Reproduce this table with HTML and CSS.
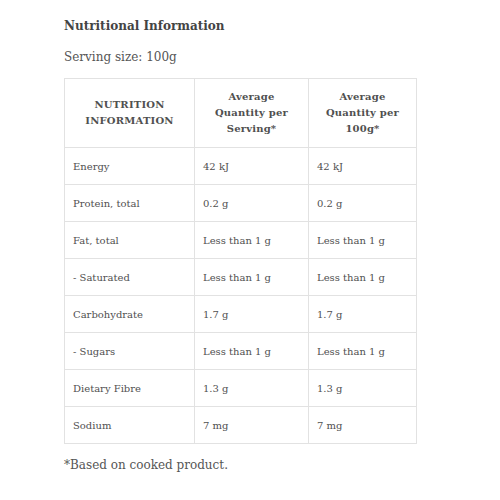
FILE: index.html
```html
<!DOCTYPE html>
<html>
<head>
<meta charset="utf-8">
<link rel="stylesheet" href="styles.css">
</head>
<body>
<div class="wrap">
  <h2 class="title">Nutritional Information</h2>
  <p class="serving">Serving size: 100g</p>
  <table class="nt">
    <thead>
      <tr>
        <th class="c1">NUTRITION<br>INFORMATION</th>
        <th class="c2">Average<br>Quantity per<br>Serving*</th>
        <th class="c3">Average<br>Quantity per<br>100g*</th>
      </tr>
    </thead>
    <tbody>
      <tr><td>Energy</td><td>42 kJ</td><td>42 kJ</td></tr>
      <tr><td>Protein, total</td><td>0.2 g</td><td>0.2 g</td></tr>
      <tr><td>Fat, total</td><td>Less than 1 g</td><td>Less than 1 g</td></tr>
      <tr><td>- Saturated</td><td>Less than 1 g</td><td>Less than 1 g</td></tr>
      <tr><td>Carbohydrate</td><td>1.7 g</td><td>1.7 g</td></tr>
      <tr><td>- Sugars</td><td>Less than 1 g</td><td>Less than 1 g</td></tr>
      <tr><td>Dietary Fibre</td><td>1.3 g</td><td>1.3 g</td></tr>
      <tr><td>Sodium</td><td>7 mg</td><td>7 mg</td></tr>
    </tbody>
  </table>
  <p class="foot">*Based on cooked product.</p>
</div>
</body>
</html>
```

FILE: styles.css
```css
html, body {
  margin: 0;
  padding: 0;
  background: #fff;
}
body {
  font-family: "DejaVu Serif", "Liberation Serif", serif;
  color: #555;
}
.wrap {
  padding: 17px 0 0 64px;
}
.title {
  margin: 0;
  font-size: 12px;
  font-weight: bold;
  color: #444;
  line-height: 18px;
}
.serving {
  margin: 13px 0 0 0;
  font-size: 12px;
  line-height: 18px;
  color: #555;
}
.nt {
  margin-top: 12px;
  border-collapse: collapse;
  width: 353px;
  table-layout: fixed;
}
.nt th, .nt td {
  border: 1px solid #e2e2e2;
  font-size: 10px;
  color: #505050;
}
.nt th {
  height: 68px;
  padding: 0;
  text-align: center;
  font-weight: bold;
  line-height: 16px;
  letter-spacing: 0.2px;
}
.nt th.c1 { width: 129px; }
.nt th.c2 { width: 113px; }
.nt td {
  height: 36px;
  padding: 0 0 0 8px;
  text-align: left;
  vertical-align: middle;
}
.foot {
  margin: 12px 0 0 0;
  font-size: 12px;
  line-height: 18px;
  color: #555;
}
```
